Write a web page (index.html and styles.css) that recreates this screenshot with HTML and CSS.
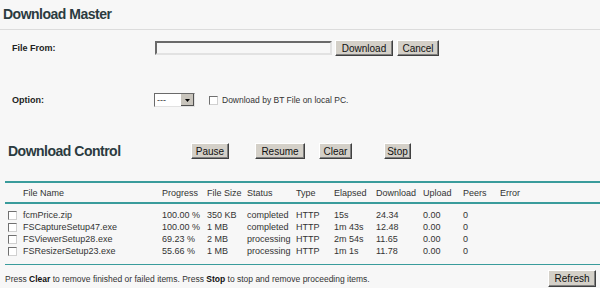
FILE: index.html
```html
<!DOCTYPE html>
<html lang="en">
<head>
    <meta charset="UTF-8">
    <title>Download Master</title>
    <link rel="stylesheet" href="styles.css">
</head>
<body>
    <h1 class="title">Download Master</h1>

    <div class="form-row row-file">
        <label class="label">File From:</label>
        <div class="controls">
            <input type="text" class="text-input">
            <button class="btn btn-download">Download</button>
            <button class="btn btn-cancel">Cancel</button>
        </div>
    </div>

    <div class="form-row row-option">
        <label class="label">Option:</label>
        <div class="controls">
            <select class="select"><option>---</option></select>
            <label class="bt-check"><input type="checkbox" class="check">Download by BT File on local PC.</label>
        </div>
    </div>

    <div class="control-bar">
        <h2 class="subtitle">Download Control</h2>
        <button class="btn btn-pause">Pause</button>
        <button class="btn btn-resume">Resume</button>
        <button class="btn btn-clear">Clear</button>
        <button class="btn btn-stop">Stop</button>
    </div>

    <table class="list">
        <colgroup>
            <col style="width:18px">
            <col style="width:139px">
            <col style="width:45px">
            <col style="width:40px">
            <col style="width:49px">
            <col style="width:38px">
            <col style="width:42px">
            <col style="width:47px">
            <col style="width:40px">
            <col style="width:37px">
            <col>
        </colgroup>
        <thead>
            <tr>
                <th></th>
                <th>File Name</th>
                <th>Progress</th>
                <th>File Size</th>
                <th>Status</th>
                <th>Type</th>
                <th>Elapsed</th>
                <th>Download</th>
                <th>Upload</th>
                <th>Peers</th>
                <th>Error</th>
            </tr>
        </thead>
        <tbody>
            <tr>
                <td><input type="checkbox" class="check"></td>
                <td>fcmPrice.zip</td>
                <td>100.00 %</td>
                <td>350 KB</td>
                <td>completed</td>
                <td>HTTP</td>
                <td>15s</td>
                <td>24.34</td>
                <td>0.00</td>
                <td>0</td>
                <td></td>
            </tr>
            <tr>
                <td><input type="checkbox" class="check"></td>
                <td>FSCaptureSetup47.exe</td>
                <td>100.00 %</td>
                <td>1 MB</td>
                <td>completed</td>
                <td>HTTP</td>
                <td>1m 43s</td>
                <td>12.48</td>
                <td>0.00</td>
                <td>0</td>
                <td></td>
            </tr>
            <tr>
                <td><input type="checkbox" class="check"></td>
                <td>FSViewerSetup28.exe</td>
                <td>69.23 %</td>
                <td>2 MB</td>
                <td>processing</td>
                <td>HTTP</td>
                <td>2m 54s</td>
                <td>11.65</td>
                <td>0.00</td>
                <td>0</td>
                <td></td>
            </tr>
            <tr>
                <td><input type="checkbox" class="check"></td>
                <td>FSResizerSetup23.exe</td>
                <td>55.66 %</td>
                <td>1 MB</td>
                <td>processing</td>
                <td>HTTP</td>
                <td>1m 1s</td>
                <td>11.78</td>
                <td>0.00</td>
                <td>0</td>
                <td></td>
            </tr>
        </tbody>
    </table>

    <div class="footer">
        <p class="hint">Press <b>Clear</b> to remove finished or failed items. Press <b>Stop</b> to stop and remove proceeding items.</p>
        <button class="btn btn-refresh">Refresh</button>
    </div>
</body>
</html>
```

FILE: styles.css
```css
body {
    font-family: "Liberation Sans", Arial, sans-serif;
    font-size: 9px;
    background-color: #f7f7f7;
    color: #333;
    margin: 0;
    padding: 0;
}
.title {
    margin: 0;
    padding: 0 3px;
    font-size: 14px;
    letter-spacing: -0.5px;
    line-height: 29px;
    color: #2b3b40;
    border-bottom: 1px solid #dcdcdc;
}
.form-row {
    display: grid;
    grid-template-columns: 142px auto;
    align-items: center;
    padding-left: 12px;
    height: 16px;
}
.row-file {
    margin-top: 10px;
}
.row-option {
    margin-top: 36px;
}
.label {
    font-size: 9px;
    font-weight: bold;
    color: #222;
}
.controls {
    display: flex;
    align-items: center;
}
.row-file .controls {
    padding-left: 1px;
}
.text-input {
    width: 177px;
    height: 14px;
    box-sizing: border-box;
    margin: 0;
    padding: 0;
    background-color: #f7f7f7;
    border: 2px solid;
    border-color: #6a6a6a #e2e2e2 #e2e2e2 #6a6a6a;
}
.btn {
    font-family: "Liberation Sans", Arial, sans-serif;
    font-size: 10px;
    color: #111;
    height: 16px;
    box-sizing: border-box;
    margin: 0;
    padding: 0 2px;
    background-color: #d4d0c8;
    border: 1px solid;
    border-color: #fff #404040 #404040 #fff;
    box-shadow: inset -1px -1px #808080;
    line-height: 13px;
}
.btn-download {
    width: 58px;
    margin-left: 3px;
}
.btn-cancel {
    width: 42px;
    margin-left: 4px;
}
.select {
    width: 41px;
    height: 14px;
    box-sizing: border-box;
    margin: 0;
    padding: 0 0 0 2px;
    font-family: "Liberation Sans", Arial, sans-serif;
    font-size: 9px;
    color: #333;
    appearance: none;
    -webkit-appearance: none;
    border: 1px solid;
    border-color: #6a6a6a #e2e2e2 #e2e2e2 #6a6a6a;
    border-radius: 0;
    background: #fff url("data:image/svg+xml,%3Csvg xmlns='http://www.w3.org/2000/svg' width='13' height='12'%3E%3Crect width='13' height='12' fill='%23c8c4bc'/%3E%3Cpath d='M0 11.5H13M12.5 0V12' stroke='%23505050'/%3E%3Cpath d='M4 5h5l-2.5 3z' fill='%23000'/%3E%3C/svg%3E") no-repeat right 0 top 0;
}
.bt-check {
    display: flex;
    align-items: center;
    margin-left: 14px;
    font-size: 8.5px;
    color: #333;
}
.check {
    appearance: none;
    -webkit-appearance: none;
    width: 9px;
    height: 9px;
    box-sizing: border-box;
    margin: 0 4px 0 0;
    background-color: #fff;
    border: 1px solid;
    border-color: #707070 #d0d0d0 #d0d0d0 #707070;
}
.control-bar {
    display: flex;
    align-items: center;
    margin-top: 35px;
    height: 16px;
}
.subtitle {
    margin: 0;
    padding-left: 8px;
    width: 183px;
    font-size: 14px;
    letter-spacing: -0.5px;
    color: #2b3b40;
}
.btn-pause {
    width: 38px;
}
.btn-resume {
    width: 50px;
    margin-left: 26px;
}
.btn-clear {
    width: 33px;
    margin-left: 14px;
}
.btn-stop {
    width: 27px;
    margin-left: 32px;
}
.list {
    margin: 22px 0 0 5px;
    width: 595px;
    table-layout: fixed;
    border-collapse: collapse;
    border-top: 2px solid #3a9c9c;
    border-bottom: 1px solid #3a9c9c;
}
.list th {
    font-weight: normal;
    text-align: left;
    padding: 0;
    height: 19px;
    border-bottom: 2px solid #3a9c9c;
    white-space: nowrap;
}
.list td {
    padding: 0;
    height: 12px;
    white-space: nowrap;
    vertical-align: middle;
}
.list td:first-child {
    padding-left: 3px;
}
.list td .check {
    display: block;
}
.list tbody tr:first-child td {
    padding-top: 5px;
}
.list tbody tr:last-child td {
    padding-bottom: 7px;
}
.footer {
    display: flex;
    align-items: center;
    justify-content: space-between;
    padding: 0 4px 0 5px;
    margin-top: 5px;
}
.hint {
    margin: 0;
    font-size: 8.5px;
    color: #333;
}
.hint b {
    color: #111;
}
.btn-refresh {
    width: 48px;
    height: 17px;
}
```
